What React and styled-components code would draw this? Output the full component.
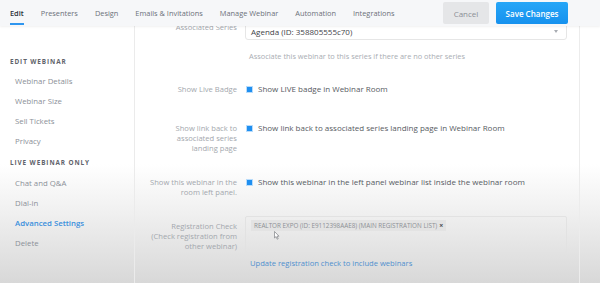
import styled, { createGlobalStyle } from "styled-components";

const GlobalStyle = createGlobalStyle`
  html, body {
    margin: 0;
    padding: 0;
  }
  body {
    font-family: "Open Sans", "Liberation Sans", sans-serif;
    background: linear-gradient(to bottom, #ffffff 0%, #ffffff 58%, #f0f0f0 75%, #d8d8d8 100%);
    height: 283px;
    overflow: hidden;
  }
`;

const Page = styled.div`
  width: 600px;
  height: 283px;
  display: flex;
  flex-direction: column;
`;

const TopBar = styled.div`
  height: 26px;
  flex-shrink: 0;
  display: flex;
  align-items: center;
  padding: 0 32px 0 10px;
  background: #f6f7f9;
  box-shadow: 0 1px 2px rgba(0, 0, 0, 0.06);
  position: relative;
  z-index: 2;
`;

const Tabs = styled.nav`
  display: flex;
  gap: 17px;
  flex: 1;
  height: 100%;
`;

const Tab = styled.div`
  position: relative;
  display: flex;
  align-items: center;
  font-size: 7.4px;
  font-weight: ${(p) => (p.$active ? 600 : 400)};
  color: ${(p) => (p.$active ? "#2c3038" : "#6c717a")};

  &::after {
    content: "";
    display: ${(p) => (p.$active ? "block" : "none")};
    position: absolute;
    left: 0;
    right: 0;
    bottom: 1px;
    height: 2px;
    background: #2f96ef;
  }
`;

const Actions = styled.div`
  display: flex;
  gap: 7px;
`;

const Button = styled.button`
  height: 22px;
  border: none;
  border-radius: 2px;
  padding: 0;
  width: ${(p) => (p.$primary ? "72px" : "46px")};
  font-family: inherit;
  font-size: 8px;
  font-weight: ${(p) => (p.$primary ? 600 : 400)};
  color: ${(p) => (p.$primary ? "#ffffff" : "#8b8f95")};
  background: ${(p) => (p.$primary ? "linear-gradient(#26a6f7, #1691ee)" : "#e5e6e8")};
`;

const Body = styled.div`
  flex: 1;
  display: flex;
  min-height: 0;
`;

const Sidebar = styled.aside`
  width: 135px;
  flex-shrink: 0;
  border-right: 1px solid #ebebeb;
  padding-top: 29px;
  box-sizing: border-box;
`;

const SectionTitle = styled.div`
  font-size: 6.4px;
  font-weight: 700;
  letter-spacing: 0.9px;
  color: #5f636b;
  padding-left: 10px;
  height: 13px;
  line-height: 13px;
  margin-top: ${(p) => (p.$spaced ? "5px" : "0")};
  margin-bottom: ${(p) => (p.$spaced ? "4px" : "3px")};
`;

const NavItem = styled.div`
  font-size: 7.8px;
  color: ${(p) => (p.$active ? "#3a8fdc" : "#8b9098")};
  font-weight: ${(p) => (p.$active ? 600 : 400)};
  padding-left: 15px;
  height: 20px;
  line-height: 20px;
`;

const Main = styled.main`
  width: 444px;
  flex-shrink: 0;
  border-right: 1px solid #ececec;
  overflow: hidden;
  position: relative;
`;

const Scroll = styled.div`
  margin-top: -10px;
`;

const Row = styled.div`
  display: flex;
  gap: 8px;
  align-items: flex-start;
  margin-top: ${(p) => p.$top || "0"};
`;

const Label = styled.div`
  width: 88px;
  margin-left: 14px;
  flex-shrink: 0;
  text-align: right;
  font-size: 7.6px;
  line-height: 10px;
  color: #a3a7ad;
  padding-top: ${(p) => p.$pad || "0"};
`;

const Control = styled.div`
  width: 322px;
`;

const Select = styled.div`
  height: 24px;
  border: 1px solid #e6e6e6;
  border-radius: 3px;
  box-sizing: border-box;
  display: flex;
  align-items: center;
  justify-content: space-between;
  padding: 6px 8px 0 5px;
  font-size: 8px;
  color: #3f434a;
  background: #fff;
`;

const Caret = styled.span`
  width: 0;
  height: 0;
  border-left: 2.5px solid transparent;
  border-right: 2.5px solid transparent;
  border-top: 3px solid #a8acb2;
`;

const Help = styled.div`
  font-size: 7.4px;
  color: #a9adb3;
  padding-left: 4px;
  margin-top: 11px;
`;

const Check = styled.label`
  display: flex;
  align-items: center;
  gap: 6px;
  font-size: 8px;
  line-height: 10px;
  color: #575b62;
  padding-left: 2px;
`;

const Box = styled.span`
  width: 5px;
  height: 5px;
  background: #1f8ff0;
  outline: 1px solid #b9dcfb;
  flex-shrink: 0;
`;

const TagArea = styled.div`
  position: relative;
  height: 37px;
  border: 1px solid #e2e2e2;
  border-radius: 2px;
  box-sizing: border-box;
  padding: 3px 5px;
  display: flex;
  align-items: flex-start;
`;

const Tag = styled.span`
  display: inline-flex;
  align-items: center;
  gap: 2px;
  height: 11px;
  padding: 0 3px;
  background: #e3e3e3;
  font-size: 6.3px;
  color: #8d9096;
`;

const Remove = styled.span`
  color: #4a4d52;
  font-size: 7px;
  font-weight: 700;
`;

const Cursor = styled.svg`
  position: absolute;
  left: 28px;
  top: 14px;
`;

const Link = styled.div`
  font-size: 7.6px;
  color: #4f8fce;
  padding-left: 5px;
  margin-top: 5px;
`;

const RightStrip = styled.div`
  flex: 1;
`;

const tabs = [
  "Edit",
  "Presenters",
  "Design",
  "Emails & Invitations",
  "Manage Webinar",
  "Automation",
  "Integrations",
];

export default function App() {
  return (
    <>
      <GlobalStyle />
      <Page>
        <TopBar>
          <Tabs>
            {tabs.map((t, i) => (
              <Tab key={t} $active={i === 0}>
                {t}
              </Tab>
            ))}
          </Tabs>
          <Actions>
            <Button>Cancel</Button>
            <Button $primary>Save Changes</Button>
          </Actions>
        </TopBar>
        <Body>
          <Sidebar>
            <SectionTitle>EDIT WEBINAR</SectionTitle>
            <NavItem>Webinar Details</NavItem>
            <NavItem>Webinar Size</NavItem>
            <NavItem>Sell Tickets</NavItem>
            <NavItem>Privacy</NavItem>
            <SectionTitle $spaced>LIVE WEBINAR ONLY</SectionTitle>
            <NavItem>Chat and Q&amp;A</NavItem>
            <NavItem>Dial-in</NavItem>
            <NavItem $active>Advanced Settings</NavItem>
            <NavItem>Delete</NavItem>
          </Sidebar>
          <Main>
            <Scroll>
              <Row>
                <Label $pad="6px">Associated Series</Label>
                <Control>
                  <Select>
                    <span>Agenda (ID: 358805555c70)</span>
                    <Caret />
                  </Select>
                  <Help>Associate this webinar to this series if there are no other series</Help>
                </Control>
              </Row>
              <Row $top="23px">
                <Label>Show Live Badge</Label>
                <Control>
                  <Check>
                    <Box />
                    Show LIVE badge in Webinar Room
                  </Check>
                </Control>
              </Row>
              <Row $top="29px">
                <Label>Show link back to associated series landing page</Label>
                <Control>
                  <Check>
                    <Box />
                    Show link back to associated series landing page in Webinar Room
                  </Check>
                </Control>
              </Row>
              <Row $top="24px">
                <Label>Show this webinar in the room left panel.</Label>
                <Control>
                  <Check>
                    <Box />
                    Show this webinar in the left panel webinar list inside the webinar room
                  </Check>
                </Control>
              </Row>
              <Row $top="19px">
                <Label $pad="5px">
                  Registration Check (Check registration from other webinar)
                </Label>
                <Control>
                  <TagArea>
                    <Tag>
                      REALTOR EXPO (ID: E9112398AAE8) (MAIN REGISTRATION LIST)
                      <Remove>×</Remove>
                    </Tag>
                    <Cursor width="6" height="9" viewBox="0 0 6 9">
                      <path
                        d="M0.5 0.5 L0.5 7 L2 5.6 L3.2 8.2 L4.2 7.7 L3 5.2 L5 5.2 Z"
                        fill="#fff"
                        stroke="#6b6e73"
                        strokeWidth="0.6"
                        strokeLinejoin="round"
                      />
                    </Cursor>
                  </TagArea>
                  <Link>Update registration check to include webinars</Link>
                </Control>
              </Row>
            </Scroll>
          </Main>
          <RightStrip />
        </Body>
      </Page>
    </>
  );
}
